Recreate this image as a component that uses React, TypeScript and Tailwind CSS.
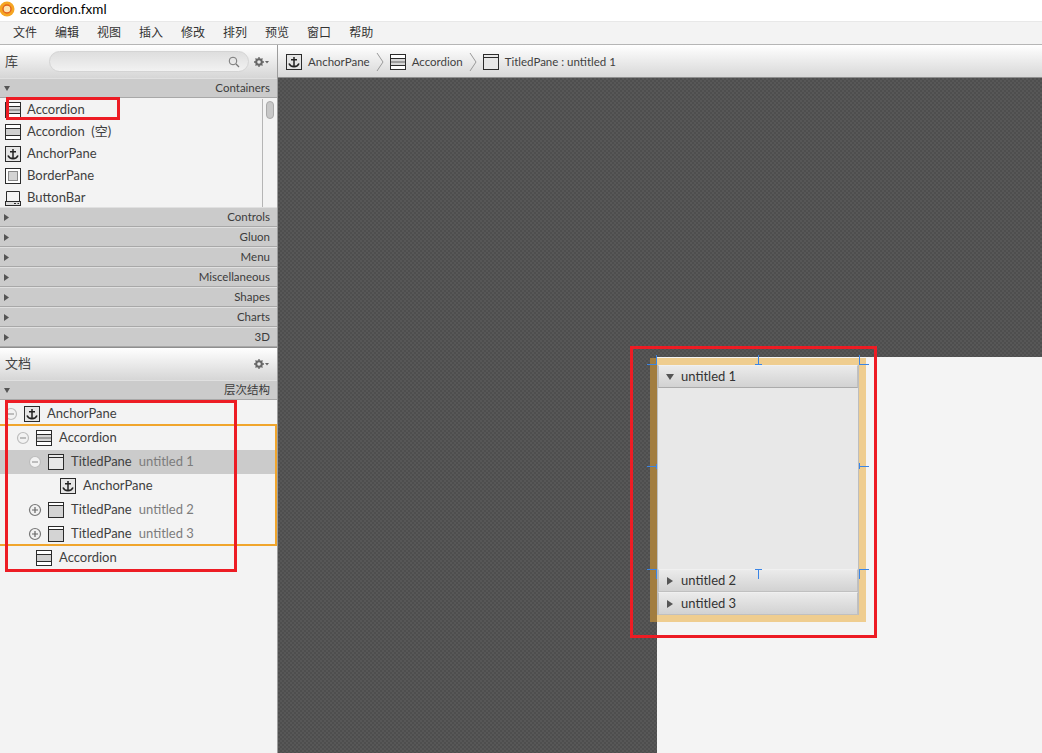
type IconName = "accordion" | "accordionEmpty" | "anchor" | "border" | "buttonbar" | "titled" | "titledEmpty";

const Icon = ({ name }: { name: IconName }) => {
  const s = "#2b2b2b";
  return (
    <svg width="16" height="16" viewBox="0 0 16 16" className="shrink-0">
      {name === "accordion" && (
        <>
          <rect x="0.5" y="0.5" width="15" height="15" fill="#fff" stroke={s} />
          <rect x="1" y="5" width="14" height="6" fill="#d6d6d6" />
          <path d="M1 4.5H15M1 11.5H15" stroke={s} />
          <path d="M1 8H15" stroke="#666" />
        </>
      )}
      {name === "accordionEmpty" && (
        <>
          <rect x="0.5" y="0.5" width="15" height="15" fill="#fff" stroke={s} />
          <rect x="1" y="5" width="14" height="6" fill="#d0d0d0" />
          <path d="M1 4.5H15M1 11.5H15" stroke={s} />
        </>
      )}
      {name === "anchor" && (
        <>
          <rect x="0.5" y="0.5" width="15" height="15" fill="#e6e6e6" stroke={s} />
          <path d="M8 3V12.5M5 5.8H11" fill="none" stroke="#222" strokeWidth="1.5" />
          <path d="M3 9.5C4 12 6 12.6 8 12.6S12 12 13 9.5" fill="none" stroke="#222" strokeWidth="1.6" />
        </>
      )}
      {name === "border" && (
        <>
          <rect x="0.5" y="0.5" width="15" height="15" fill="#fff" stroke={s} />
          <rect x="3.5" y="3.5" width="9" height="9" fill="#d4d4d4" stroke="#8a8a8a" />
        </>
      )}
      {name === "buttonbar" && (
        <>
          <path d="M1.5 11V1.5H14.5V11" fill="none" stroke={s} />
          <rect x="0.5" y="11.5" width="15" height="4" fill="#ddd" stroke={s} />
          <path d="M9 13.5H11M12.5 13.5H14" stroke={s} />
        </>
      )}
      {name === "titled" && (
        <>
          <rect x="0.5" y="0.5" width="15" height="15" fill="#e8e8e8" stroke={s} />
          <path d="M1 3.5H15" stroke={s} />
        </>
      )}
      {name === "titledEmpty" && (
        <>
          <rect x="0.5" y="0.5" width="15" height="15" fill="#d4d4d4" stroke={s} />
          <rect x="1" y="1" width="14" height="2" fill="#fff" />
          <path d="M1 3.5H15" stroke={s} />
        </>
      )}
    </svg>
  );
};

const Gear = () => (
  <svg width="15" height="10" viewBox="0 0 15 10">
    <circle cx="5" cy="5" r="2.8" fill="none" stroke="#666" strokeWidth="2" />
    <path d="M5 0V2M5 8V10M0 5H2M8 5H10M1.5 1.5L3 3M7 7L8.5 8.5M1.5 8.5L3 7M7 3L8.5 1.5" stroke="#666" strokeWidth="1.3" />
    <path d="M11 4H15L13 6.5Z" fill="#666" />
  </svg>
);

const HeaderArrow = ({ open }: { open?: boolean }) =>
  open ? (
    <svg width="6" height="5" viewBox="0 0 6 5" className="shrink-0">
      <path d="M0 0H6L3 5Z" fill="#555" />
    </svg>
  ) : (
    <svg width="5" height="7" viewBox="0 0 5 7" className="shrink-0">
      <path d="M0 0L5 3.5L0 7Z" fill="#555" />
    </svg>
  );

const PaneArrow = ({ open }: { open?: boolean }) =>
  open ? (
    <svg width="8" height="6" viewBox="0 0 8 6" className="shrink-0">
      <path d="M0 0H8L4 6Z" fill="#555" />
    </svg>
  ) : (
    <svg width="6" height="8" viewBox="0 0 6 8" className="shrink-0 ml-[1px] mr-[1px]">
      <path d="M0 0L6 4L0 8Z" fill="#555" />
    </svg>
  );

const SectionHeader = ({ title, open }: { title: string; open?: boolean }) => (
  <div className="h-5 shrink-0 flex items-center justify-between pl-1 pr-[7px] bg-[#cbcbcb] border-b border-[#a8a8a8] border-t border-t-[#e0e0e0] text-[11.5px] text-[#3c3c3c]">
    <HeaderArrow open={open} />
    <span>{title}</span>
  </div>
);

const LibraryItem = ({ icon, label }: { icon: IconName; label: string }) => (
  <div className="h-[22px] shrink-0 flex items-center gap-[6px] pl-[5px] text-[13px] text-[#3f3f3f]">
    <Icon name={icon} />
    <span className="whitespace-pre">{label}</span>
  </div>
);

const Toggle = ({ open }: { open: boolean }) => (
  <svg width="14" height="14" viewBox="0 0 14 14" className="shrink-0">
    <circle cx="7" cy="7" r="5.5" fill="#f2f2f2" stroke={open ? "#bdbdbd" : "#777"} strokeWidth="1.2" />
    <path d={open ? "M4 7H10" : "M4 7H10M7 4V10"} stroke={open ? "#9a9a9a" : "#666"} strokeWidth="1.2" />
  </svg>
);

type TreeRow = {
  indent: string;
  toggle?: "open" | "closed";
  icon: IconName;
  label: string;
  note?: string;
  selected?: boolean;
};

const rows: TreeRow[] = [
  { indent: "pl-[4px]", toggle: "open", icon: "anchor", label: "AnchorPane" },
  { indent: "pl-[16px]", toggle: "open", icon: "accordion", label: "Accordion" },
  { indent: "pl-[28px]", toggle: "open", icon: "titled", label: "TitledPane", note: "untitled 1", selected: true },
  { indent: "pl-[60px]", icon: "anchor", label: "AnchorPane" },
  { indent: "pl-[28px]", toggle: "closed", icon: "titledEmpty", label: "TitledPane", note: "untitled 2" },
  { indent: "pl-[28px]", toggle: "closed", icon: "titledEmpty", label: "TitledPane", note: "untitled 3" },
  { indent: "pl-[36px]", icon: "accordionEmpty", label: "Accordion" },
];

const Row = ({ row }: { row: TreeRow }) => (
  <div className={`h-6 flex items-center text-[13px] text-[#3f3f3f] ${row.indent} ${row.selected ? "bg-[#cbcbcb]" : ""}`}>
    {row.toggle && (
      <div className="w-5 shrink-0">
        <Toggle open={row.toggle === "open"} />
      </div>
    )}
    <Icon name={row.icon} />
    <span className="ml-[7px]">{row.label}</span>
    {row.note && <span className="ml-[7px] text-[#7c7c7c]">{row.note}</span>}
  </div>
);

const Crumb = ({ icon, label, sep }: { icon: IconName; label: string; sep?: boolean }) => (
  <div className="flex items-center">
    <Icon name={icon} />
    <span className="ml-[6px] text-[11.5px] text-[#3f3f3f]">{label}</span>
    {sep && (
      <svg width="10" height="20" viewBox="0 0 10 20" className="mx-[5px]">
        <path d="M2 1L8 10L2 19" fill="none" stroke="#9a9a9a" />
      </svg>
    )}
  </div>
);

const Pane = ({ label, open }: { label: string; open?: boolean }) => (
  <div className={`h-[23px] shrink-0 flex items-center pl-[7px] gap-[7px] text-[13px] text-[#333] bg-gradient-to-b from-[#ebebeb] to-[#d2d2d2] border border-[#c0c0c0] border-t-[#f0f0f0] ${open ? "border-b-[#ababab]" : ""}`}>
    <PaneArrow open={open} />
    <span>{label}</span>
  </div>
);

export default function App() {
  return (
    <div className="w-[1042px] h-[753px] overflow-hidden flex flex-col bg-[#f3f3f3] [font-family:'Lato','Noto_Sans_CJK_SC',sans-serif]">
      <div className="h-[21px] shrink-0 bg-white flex items-center">
        <svg width="16" height="16" viewBox="0 0 16 16" className="-ml-[1px] mb-[3px]">
          <circle cx="8" cy="8" r="7.5" fill="#f5a623" />
          <circle cx="8" cy="8" r="4" fill="#fde3b0" stroke="#e2611c" strokeWidth="1.4" />
        </svg>
        <span className="ml-[5px] text-[13.5px] text-black mb-[3px]">accordion.fxml</span>
      </div>
      <div className="h-[24px] shrink-0 flex items-center gap-[18px] pl-[13px] bg-[#f3f3f3] border-b border-[#b5b5b5] border-t border-t-[#e8e8e8] text-[12px] text-[#333]">
        {["文件", "编辑", "视图", "插入", "修改", "排列", "预览", "窗口", "帮助"].map((m) => (
          <span key={m}>{m}</span>
        ))}
      </div>

      <div className="flex-1 flex min-h-0">
        <div className="w-[278px] shrink-0 flex flex-col border-r border-[#9c9c9c] relative">
          <div className="h-[33px] shrink-0 flex items-center pl-[5px] pr-2 bg-gradient-to-b from-white to-[#d6d6d6] text-[13px] text-[#444]">
            <span className="w-[44px]">库</span>
            <div className="w-[201px] h-[21px] rounded-full border border-[#d4d4d4] bg-gradient-to-b from-[#dedede] to-[#f2f2f2] flex items-center justify-end pr-2">
              <svg width="12" height="12" viewBox="0 0 12 12">
                <circle cx="5" cy="5" r="3.8" fill="none" stroke="#777" />
                <path d="M8 8L11 11" stroke="#777" strokeWidth="1.3" />
              </svg>
            </div>
            <div className="ml-[5px]"><Gear /></div>
          </div>
          <SectionHeader title="Containers" open />
          <div className="h-[109px] shrink-0 flex overflow-hidden pt-px">
            <div className="flex-1 flex flex-col">
              <LibraryItem icon="accordion" label="Accordion" />
              <LibraryItem icon="accordionEmpty" label="Accordion  (空)" />
              <LibraryItem icon="anchor" label="AnchorPane" />
              <LibraryItem icon="border" label="BorderPane" />
              <LibraryItem icon="buttonbar" label="ButtonBar" />
            </div>
            <div className="w-[15px] shrink-0 border-l border-[#b5b5b5] flex justify-center pt-[2px]">
              <div className="w-2 h-[18px] rounded bg-[#c8c8c8] border border-[#aaa]" />
            </div>
          </div>
          {["Controls", "Gluon", "Menu", "Miscellaneous", "Shapes", "Charts", "3D"].map((t) => (
            <SectionHeader key={t} title={t} />
          ))}
          <div className="h-[33px] shrink-0 flex items-center justify-between pl-[5px] pr-2 bg-gradient-to-b from-white to-[#d6d6d6] border-t border-[#8f8f8f] text-[13px] text-[#444]">
            <span>文档</span>
            <Gear />
          </div>
          <SectionHeader title="层次结构" open />
          <div className="pt-[2px]">
            {rows.map((r, i) => (
              <Row key={i} row={r} />
            ))}
          </div>

          {/* annotations drawn over the panel */}
          <div className="absolute left-[6px] top-[52px] w-[114px] h-[23px] border-[3px] border-[#ed1c24]" />
          <div className="absolute left-0 top-[379px] w-[277px] h-[122px] border-2 border-l-0 border-[#f0a52c]" />
          <div className="absolute left-[5px] top-[355px] w-[232px] h-[172px] border-[3px] border-[#ed1c24]" />
        </div>

        <div className="flex-1 flex flex-col min-w-0">
          <div className="h-[33px] shrink-0 flex items-center pl-[8px] pt-px bg-gradient-to-b from-white to-[#d8d8d8] border-b border-[#8f8f8f]">
            <Crumb icon="anchor" label="AnchorPane" sep />
            <Crumb icon="accordion" label="Accordion" sep />
            <Crumb icon="titled" label="TitledPane : untitled 1" />
          </div>
          <div className="flex-1 relative bg-[#535353] bg-[repeating-conic-gradient(#4e4e4e_0_25%,#575757_0_50%)] bg-[length:4px_4px]">
            <div className="absolute left-[379px] top-[279px] right-0 bottom-0 bg-[#f4f4f4]" />

            {/* selected accordion on the canvas */}
            <div className="absolute left-[372px] top-[280px] w-[216px] h-[264px] bg-[#efcd8f]" />
            <div className="absolute left-[372px] top-[280px] w-[7px] h-[264px] bg-[#a27d3f]" />
            <div className="absolute left-[379px] top-[287px] w-[202px] h-[250px] flex flex-col border-x border-[#bdbdbd]">
              <Pane label="untitled 1" open />
              <div className="flex-1 bg-[#e8e8e8]" />
              <Pane label="untitled 2" />
              <Pane label="untitled 3" />
            </div>

            {/* resize handles */}
            <div className="absolute left-[369px] top-[286px] w-[9px] h-px bg-[#3a85e6]" />
            <div className="absolute left-[378px] top-[277px] w-px h-[10px] bg-[#3a85e6]" />
            <div className="absolute left-[480px] top-[277px] w-px h-[9px] bg-[#3a85e6]" />
            <div className="absolute left-[477px] top-[286px] w-[7px] h-px bg-[#3a85e6]" />
            <div className="absolute left-[581px] top-[286px] w-[10px] h-px bg-[#3a85e6]" />
            <div className="absolute left-[581px] top-[277px] w-px h-[9px] bg-[#3a85e6]" />
            <div className="absolute left-[369px] top-[388px] w-[9px] h-px bg-[#3a85e6]" />
            <div className="absolute left-[378px] top-[386px] w-px h-[5px] bg-[#3a85e6]" />
            <div className="absolute left-[581px] top-[385px] w-px h-[6px] bg-[#3a85e6]" />
            <div className="absolute left-[581px] top-[388px] w-[10px] h-px bg-[#3a85e6]" />
            <div className="absolute left-[369px] top-[491px] w-[9px] h-px bg-[#3a85e6]" />
            <div className="absolute left-[378px] top-[491px] w-px h-[10px] bg-[#3a85e6]" />
            <div className="absolute left-[477px] top-[491px] w-[7px] h-px bg-[#3a85e6]" />
            <div className="absolute left-[480px] top-[491px] w-px h-[10px] bg-[#3a85e6]" />
            <div className="absolute left-[581px] top-[491px] w-[10px] h-px bg-[#3a85e6]" />
            <div className="absolute left-[581px] top-[491px] w-px h-[10px] bg-[#3a85e6]" />

            <div className="absolute left-[352px] top-[268px] w-[247px] h-[292px] border-[3px] border-[#ed1c24]" />
          </div>
        </div>
      </div>
    </div>
  );
}
